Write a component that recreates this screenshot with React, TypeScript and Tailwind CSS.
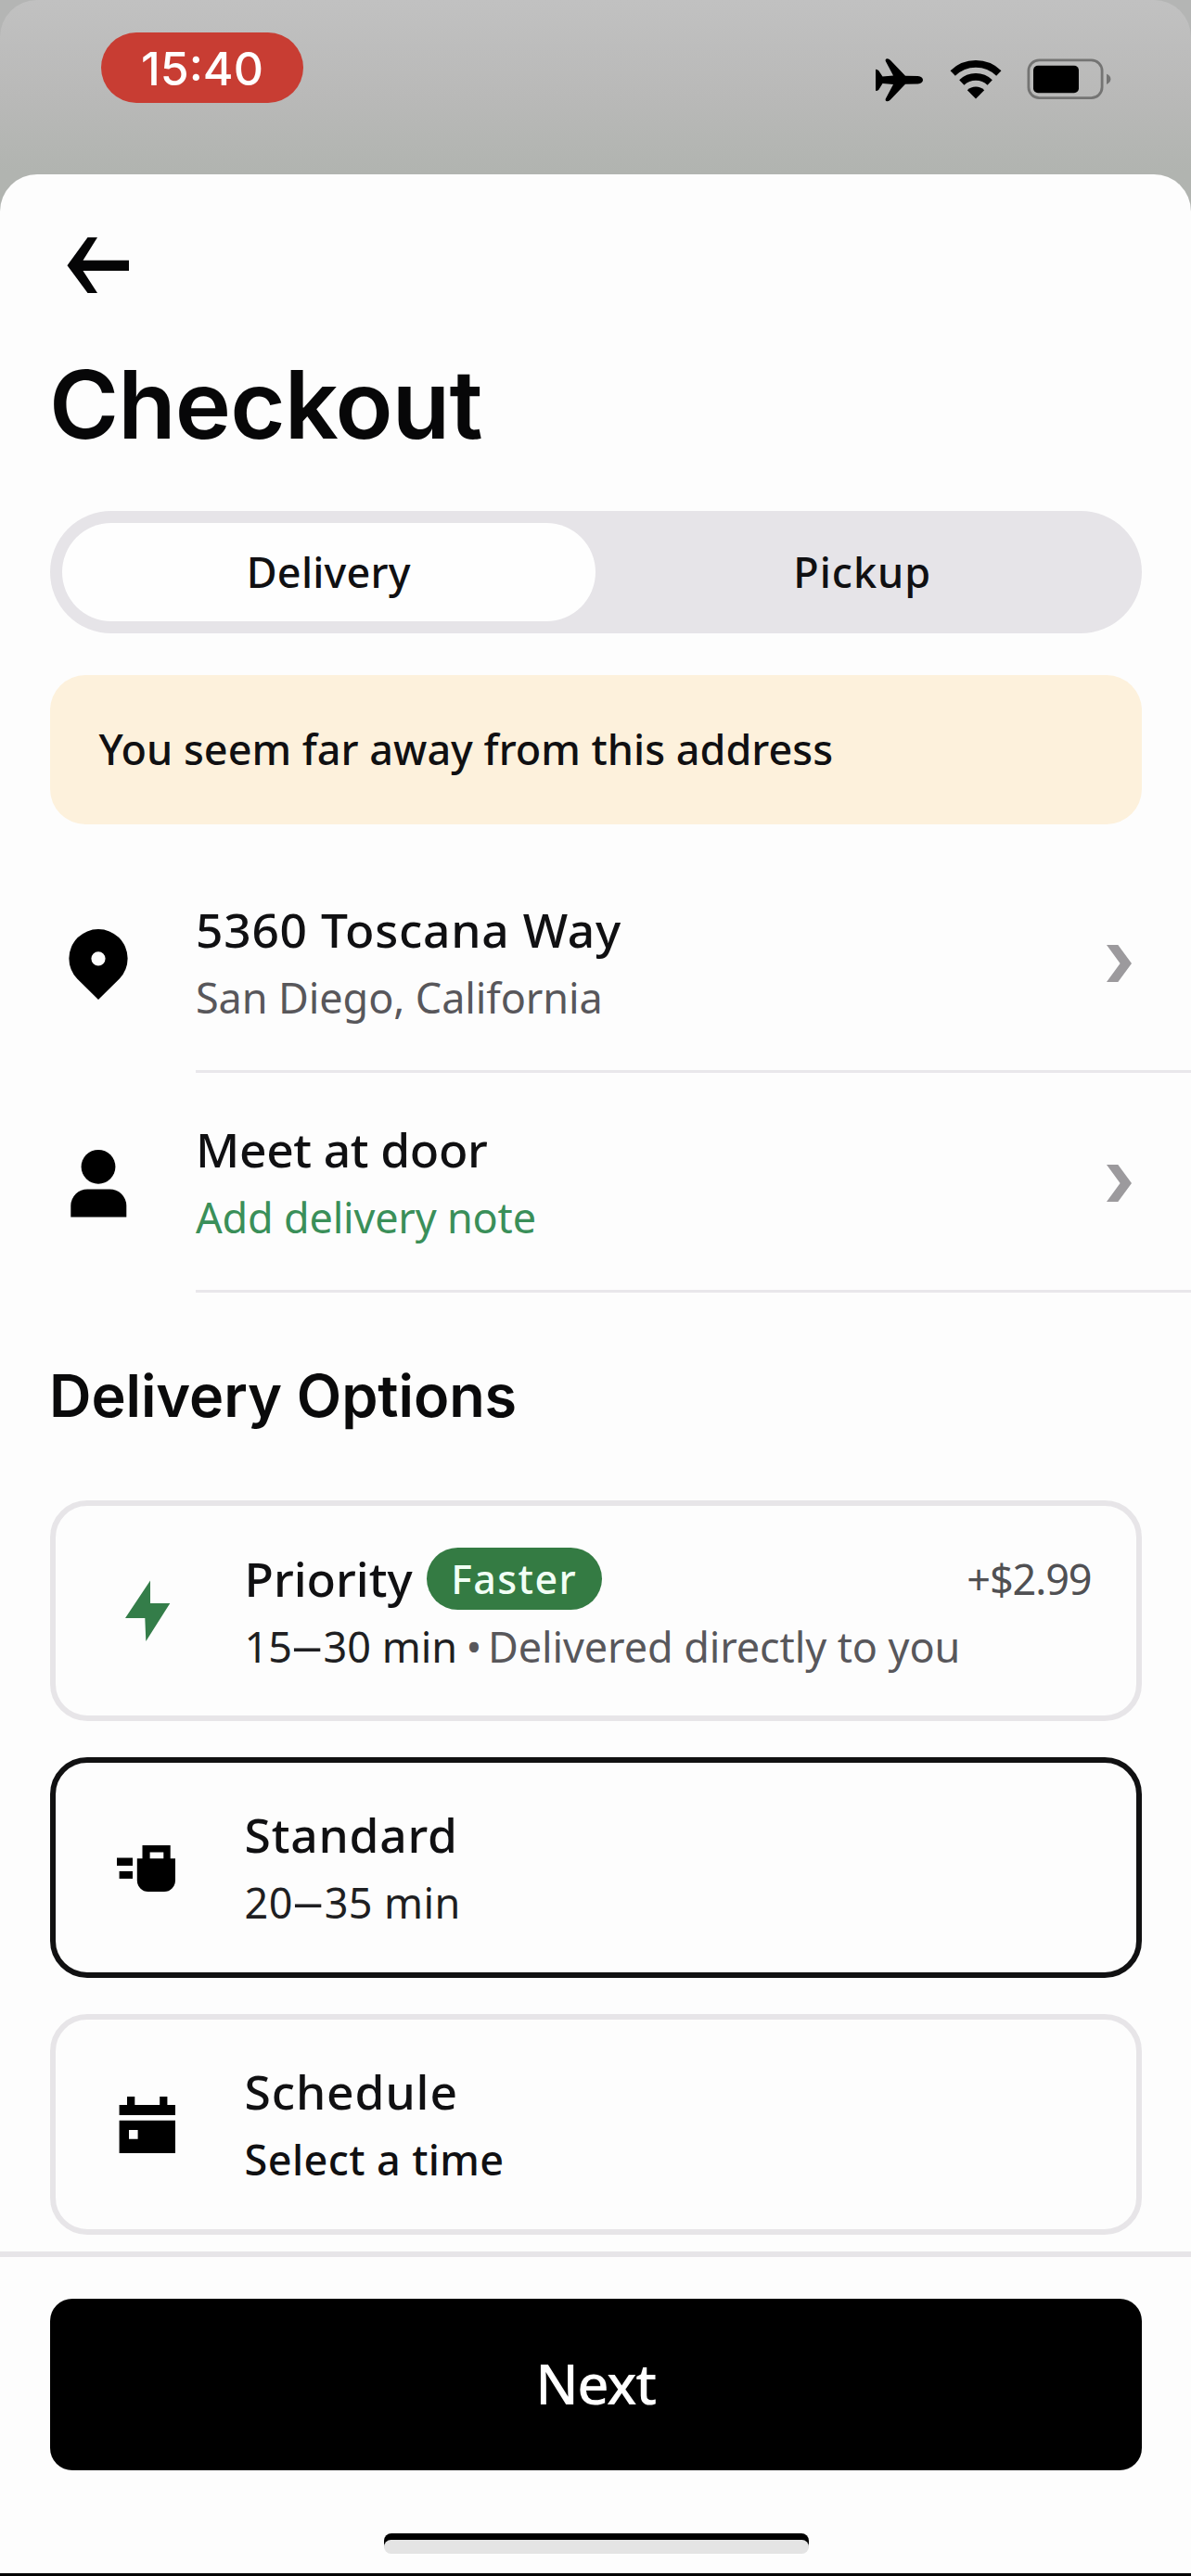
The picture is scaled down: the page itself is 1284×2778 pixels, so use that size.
import type { ReactNode } from 'react';

function StatusBar() {
  return (
    <header className="h-[188px] w-full shrink-0 bg-[#b4b5b4]">
      <div className="flex h-[230px] items-start justify-between rounded-t-[40px] bg-linear-to-b from-[#c1c1c1] via-[#b9b9b8] via-45% to-[#b1b4b0] to-80% pr-[86px] pl-[109px]">
        <div className="mt-[35px] flex h-[76px] w-[218px] items-center justify-center rounded-full bg-[#c83d33] pt-[2px] font-[Inter] text-[50px] leading-none font-medium text-white">
          15:40
        </div>
        <div className="mt-[60px] flex">
          <svg className="mr-[28px] h-[50px] w-[52px]" viewBox="0 0 52 50" fill="#000">
            <path d="M0 15.5Q0 14.5 1.2 15L3.2 16L7.5 22.5L19 21.5L10.8 6Q10 3.5 12.6 3.2Q14.4 3.2 16 5L32 21.8L45.5 22Q51 22.8 51 26.2Q51 29.6 45.5 30.4L32 30.8L16 47.4Q14.4 49.4 12.4 49.2Q10 48.8 10.8 46.4L19 31L7.5 30L3.2 37L1.2 38Q0 38.4 0 37.3Z" />
          </svg>
          <svg className="mr-[27px] h-[50px] w-[56px]" viewBox="0 0 56 50">
            <path d="M3.2 19A35.5 35.5 0 0 1 52.8 19" fill="none" stroke="#000" strokeWidth="7.6" />
            <path d="M12.8 29A22 22 0 0 1 43.2 29" fill="none" stroke="#000" strokeWidth="7.6" />
            <path d="M18.8 37.2A13.4 13.4 0 0 1 37.2 37.2L28 46.4Z" fill="#000" />
          </svg>
          <svg className="h-[50px] w-[91px]" viewBox="0 0 91 50">
            <rect x="1.9" y="4.8" width="79.2" height="40.8" rx="11.5" fill="none" stroke="#747473" strokeWidth="2.8" />
            <rect x="7" y="10.8" width="49" height="29.4" rx="5" fill="#000" />
            <path d="M86 19.7Q90.4 21.5 90.4 25.3Q90.4 29 86 31Z" fill="#747473" />
          </svg>
        </div>
      </div>
    </header>
  );
}

function Chevron() {
  return (
    <svg className="h-[40px] w-[27px]" viewBox="0 0 27 40" fill="#9c9a9d">
      <path d="M0 0H12.3L27 20L12.3 40H0L14.6 20Z" />
    </svg>
  );
}

function InfoRow({ icon, title, subtitle }: { icon: ReactNode; title: ReactNode; subtitle: ReactNode }) {
  return (
    <div className="flex h-[237px]">
      <div className="w-[211px] shrink-0 pt-[82px] pl-[74px]">{icon}</div>
      <div className="flex flex-1 justify-between border-b-[3px] border-[#e9e7eb] pr-[64px]">
        <div className="pt-[46px] leading-[73px]">
          <div className="text-[51.5px] font-medium">{title}</div>
          <div className="text-[45px]">{subtitle}</div>
        </div>
        <div className="pt-[99px]">
          <Chevron />
        </div>
      </div>
    </div>
  );
}

function OptionCard({ icon, selected, children }: { icon: ReactNode; selected?: boolean; children: ReactNode }) {
  return (
    <div
      className={`flex h-[238px] rounded-[40px] border-[6px] ${selected ? 'border-[#111112]' : 'border-[#e7e5e8]'}`}
    >
      <div className="w-[204px] shrink-0 pt-[74px] pl-[66px]">{icon}</div>
      <div className="flex-1 pt-[41px] pr-[48px] leading-[73px]">{children}</div>
    </div>
  );
}

function Dash() {
  return <span className="mx-[5.5px] inline-block origin-center -translate-y-[2px] scale-x-[1.5]">–</span>;
}

export default function App() {
  return (
    <div className="flex h-[2778px] w-[1284px] flex-col overflow-hidden bg-[#fdfdfd] font-['Noto_Sans',sans-serif] text-[#101012]">
      <StatusBar />
      <main className="relative flex flex-1 flex-col rounded-t-[40px] bg-[#fdfdfd]">
        <svg className="mt-[68px] ml-[72px] h-[60px] w-[67px]" viewBox="0 0 67 60" fill="#050506">
          <path d="M22.5 0H33L17.5 24.7H67V36H17.5L33 60H22.5L.5 30.3Z" />
        </svg>
        <h1 className="mt-[69px] ml-[53px] font-[Inter] text-[102px] leading-none font-semibold tracking-[-0.9px] text-[#070708]">
          Checkout
        </h1>

        <div className="mx-[53.5px] mt-[64px] flex h-[132px] rounded-full bg-[#e6e4e8] p-[13px] text-[45px] font-medium">
          <div className="flex flex-1 items-center justify-center rounded-full bg-[#fefefe] pb-px tracking-[0.2px]">
            Delivery
          </div>
          <div className="flex flex-1 items-center justify-center pb-px tracking-[1px]">Pickup</div>
        </div>

        <div className="mx-[53.5px] mt-[45px] flex h-[161px] items-center rounded-[38px] bg-[#fdf1dc] pb-px pl-[53px] text-[45px] font-medium">
          You seem far away from this address
        </div>

        <section className="mt-[31px]">
          <InfoRow
            icon={
              <svg className="h-[76px] w-[64px]" viewBox="0 0 64 76">
                <path
                  fillRule="evenodd"
                  d="M32 76L9.2 53.5A31.6 31.6 0 1 1 54.8 53.5ZM32 24.2A7.6 7.6 0 1 0 32 39.4A7.6 7.6 0 1 0 32 24.2Z"
                />
              </svg>
            }
            title={<span className="tracking-[0.75px]">5360 Toscana Way</span>}
            subtitle={<span className="tracking-[-0.1px] text-[#58575b]">San Diego, California</span>}
          />
          <InfoRow
            icon={
              <svg className="h-[76px] w-[64px]" viewBox="0 0 64 76">
                <circle cx="32" cy="19.3" r="18.4" />
                <path d="M2.3 73.5V61A18 18 0 0 1 20.3 43.4H44.3A18 18 0 0 1 62.3 61V73.5Z" />
              </svg>
            }
            title={<span className="tracking-[-0.35px]">Meet at door</span>}
            subtitle={<span className="tracking-[-0.2px] text-[#3a8f59]">Add delivery note</span>}
          />
        </section>

        <h2 className="mt-[79px] ml-[53px] font-[Inter] text-[63px] leading-[64px] font-semibold tracking-[-0.1px] text-[#0a0a0b]">
          Delivery Options
        </h2>

        <section className="mx-[53.5px] mt-[81px] flex flex-col gap-[39px]">
          <OptionCard
            icon={
              <svg className="h-[80px] w-[64px]" viewBox="0 0 64 80" fill="#347d49">
                <path d="M36 6.5V31H57.3L31.3 72L30.3 47H9Z" />
              </svg>
            }
          >
            <div className="flex items-center text-[51.5px] font-medium">
              <span>Priority</span>
              <span className="mt-px ml-[15px] flex h-[67px] w-[189px] items-center justify-center rounded-full bg-[#347b43] text-[43px] tracking-[1.4px] text-[#f1fff5]">
                Faster
              </span>
              <span className="mt-px ml-auto text-[45px] font-normal tracking-[-1.1px] text-[#505053]">+$2.99</span>
            </div>
            <div className="text-[45px] whitespace-nowrap text-[#58575b]">
              <span className="text-[#1f1f22]">
                15
                <Dash />
                30 min
              </span>
              <span className="tracking-[-2.5px]"> • </span>
              <span className="tracking-[-0.1px]">Delivered directly to you</span>
            </div>
          </OptionCard>

          <OptionCard
            selected
            icon={
              <svg className="h-[80px] w-[64px]" viewBox="0 0 64 80">
                <path d="M0 28.5H17V37H0ZM2.6 43H17V51H2.6Z" />
                <path
                  fillRule="evenodd"
                  d="M27.5 15H57.7V29.3H63V53A12 12 0 0 1 51 65H33.8A12 12 0 0 1 21.8 53V29.3H27.5ZM35.6 22.4V29.3H50.3V22.4Z"
                />
              </svg>
            }
          >
            <div className="text-[51.5px] font-medium tracking-[0.8px]">Standard</div>
            <div className="text-[45px] tracking-[0.4px] text-[#1f1f22]">
              20
              <Dash />
              35 min
            </div>
          </OptionCard>

          <OptionCard
            icon={
              <svg className="h-[80px] w-[64px]" viewBox="0 0 64 80">
                <path d="M2.6 18H11V9H19.3V18H46.2V9H54.4V18H63V29H2.6Z" />
                <path fillRule="evenodd" d="M2.6 34.7H63V70H2.6ZM13 45V54.7H22.6V45Z" />
              </svg>
            }
          >
            <div className="text-[51.5px] font-medium tracking-[0.9px]">Schedule</div>
            <div className="text-[45px] font-medium tracking-[0.4px]">Select a time</div>
          </OptionCard>
        </section>

        <footer className="mt-[18px] flex flex-1 flex-col border-t-[6px] border-[#e7e5e8]">
          <button className="mx-[53.5px] mt-[45px] flex h-[185px] shrink-0 items-center justify-center rounded-[24px] bg-black pb-[3px] text-[60px] font-medium tracking-[-1.5px] text-white">
            Next
          </button>
          <div className="mt-[68px] ml-[413.5px] h-[20px] w-[458px] rounded-[8px] bg-black pt-[7px]">
            <div className="h-[15px] rounded-[8px] bg-[#e4e4e4]" />
          </div>
          <div className="mt-auto h-[3px] bg-black" />
        </footer>
      </main>
    </div>
  );
}
